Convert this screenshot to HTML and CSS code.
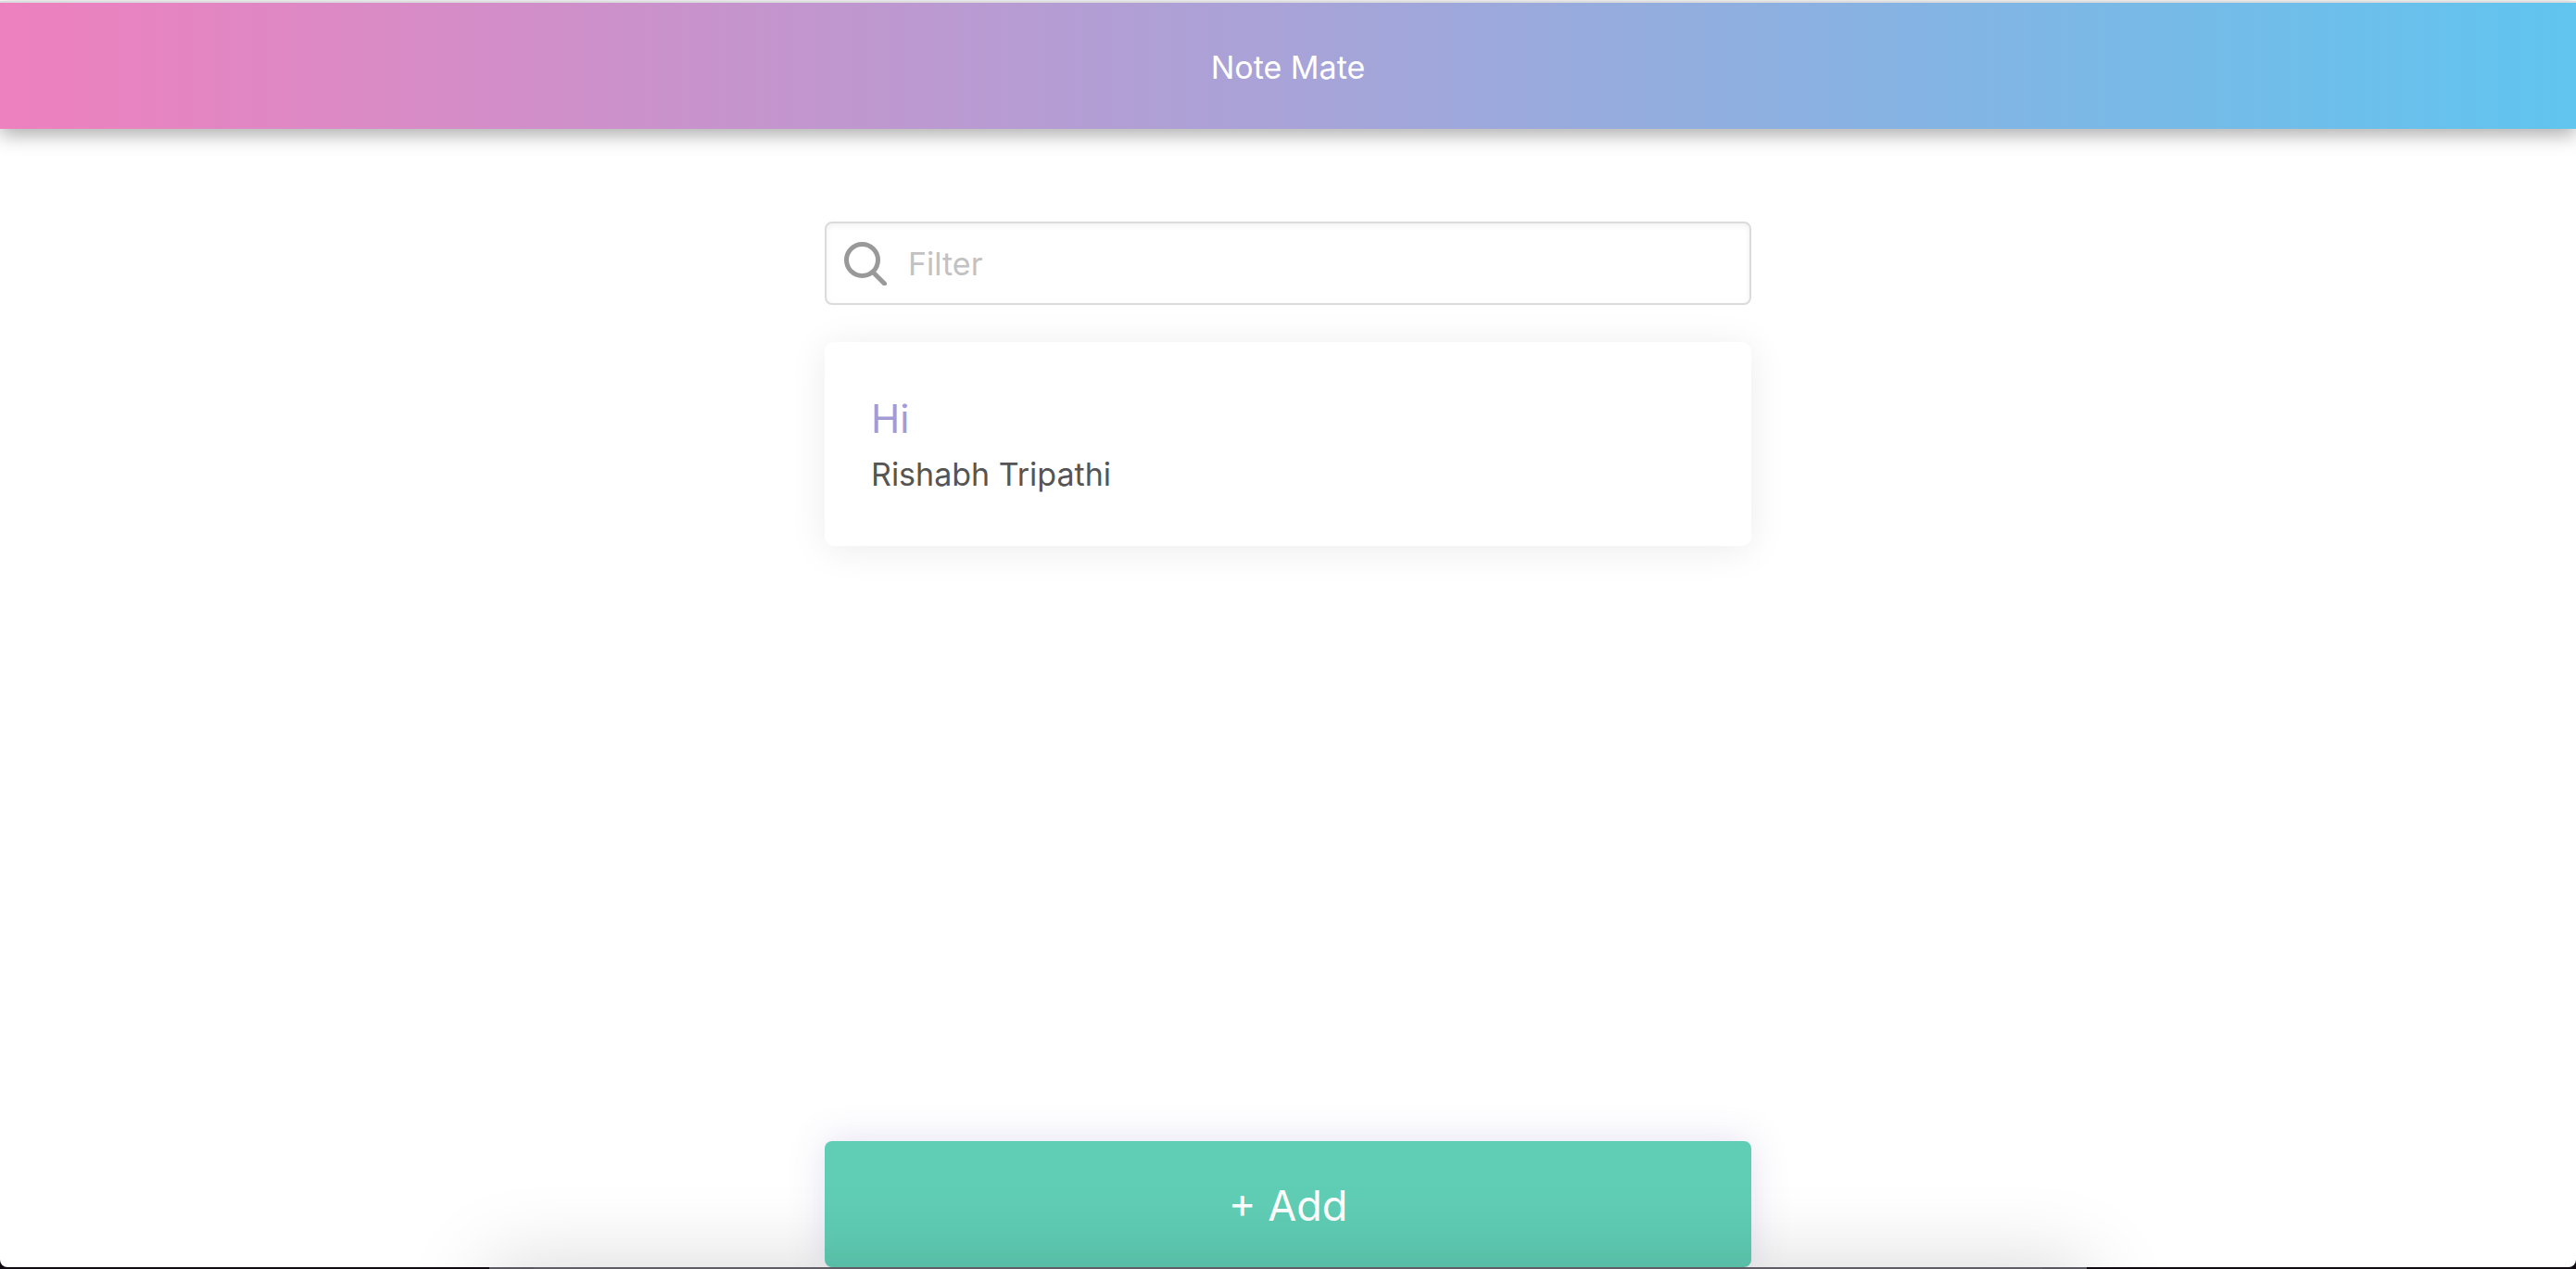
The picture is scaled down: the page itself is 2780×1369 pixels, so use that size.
FILE: index.html
```html
<!DOCTYPE html>
<html lang="en">
<head>
  <meta charset="utf-8">
  <meta name="viewport" content="width=device-width, initial-scale=1">
  <title>Note Mate</title>
  <link rel="stylesheet" href="styles.css">
</head>
<body>
  <div class="app">
    <header class="app-header">
      <h1 class="app-title">Note Mate</h1>
    </header>
    <main class="content">
      <label class="filter">
        <svg class="filter-icon" viewBox="0 0 48 48" fill="none" stroke="currentColor" stroke-width="5" stroke-linecap="round" aria-hidden="true">
          <circle cx="20.5" cy="20.5" r="17"/>
          <path d="M32.5 34 44.5 46"/>
        </svg>
        <input class="filter-input" type="text" placeholder="Filter" aria-label="Filter">
      </label>
      <article class="note">
        <h2 class="note-title">Hi</h2>
        <p class="note-text">Rishabh Tripathi</p>
      </article>
      <button class="add-button" type="button">+ Add</button>
    </main>
  </div>
  <footer class="dock-edge"></footer>
</body>
</html>
```
FILE: styles.css
```css
* {
  box-sizing: border-box;
}

body {
  margin: 0;
  min-height: 100vh;
  display: flex;
  flex-direction: column;
  background: #100a12;
  color: #555;
  font-family: Inter, "Liberation Sans", sans-serif;
}

.app {
  flex: 1;
  display: flex;
  flex-direction: column;
  padding-top: 1px;
  background: #fff;
  border-radius: 0 0 8px 8px;
}

.app-header {
  border-top: 2px solid #dcdcdf;
  padding: 48px 24px 44px;
  background: linear-gradient(to right, #ee80be, #a8a3d8, #60c5ef) padding-box;
  box-shadow: 0 6px 20px rgba(0, 0, 0, 0.34);
  text-align: center;
}

.app-title {
  margin: 0;
  color: #fff;
  font-size: 34px;
  font-weight: 400;
  line-height: 44px;
}

.content {
  flex: 1;
  display: flex;
  flex-direction: column;
  width: 100%;
  max-width: 1000px;
  margin: 0 auto;
  padding-top: 100px;
}

.filter {
  display: flex;
  align-items: center;
  gap: 22px;
  height: 90px;
  padding: 0 18px;
  border: 2px solid #dbdbdb;
  border-radius: 8px;
  box-shadow: inset 0 2px 6px rgba(0, 0, 0, 0.06);
}

.filter-icon {
  width: 48px;
  height: 48px;
  color: #999;
}

.filter-input {
  flex: 1;
  min-width: 0;
  padding: 2px 0 0;
  border: 0;
  outline: 0;
  background: transparent;
  color: #555;
  font: 400 34px/44px Inter, "Liberation Sans", sans-serif;
}

.filter-input::placeholder {
  color: #c2c2c2;
}

.note {
  margin-top: 40px;
  padding: 53px 50px 47px;
  border-radius: 10px;
  background: #fff;
  box-shadow: 0 4px 40px rgba(0, 0, 0, 0.08);
}

.note-title {
  margin: 0;
  color: #a39bd6;
  font-size: 42px;
  font-weight: 400;
  line-height: 60px;
}

.note-text {
  margin: 0;
  font-size: 34px;
  line-height: 60px;
}

.add-button {
  height: 136px;
  margin-top: auto;
  padding: 4px 0 0;
  border: 0;
  border-radius: 8px;
  background: #60ceb5;
  box-shadow: 0 0 40px rgba(100, 80, 170, 0.18);
  color: #fff;
  font: 400 45px/56px Inter, "Liberation Sans", sans-serif;
}

/* Top edge of the dock, which casts its shade upwards over the page. */
.dock-edge {
  position: relative;
  align-self: center;
  width: 62%;
  height: 2px;
  background: #605d67;
}

.dock-edge::before {
  content: "";
  position: absolute;
  inset: 0 48px;
  box-shadow: 0 48px 90px 48px rgba(0, 0, 0, 0.17);
}
```
